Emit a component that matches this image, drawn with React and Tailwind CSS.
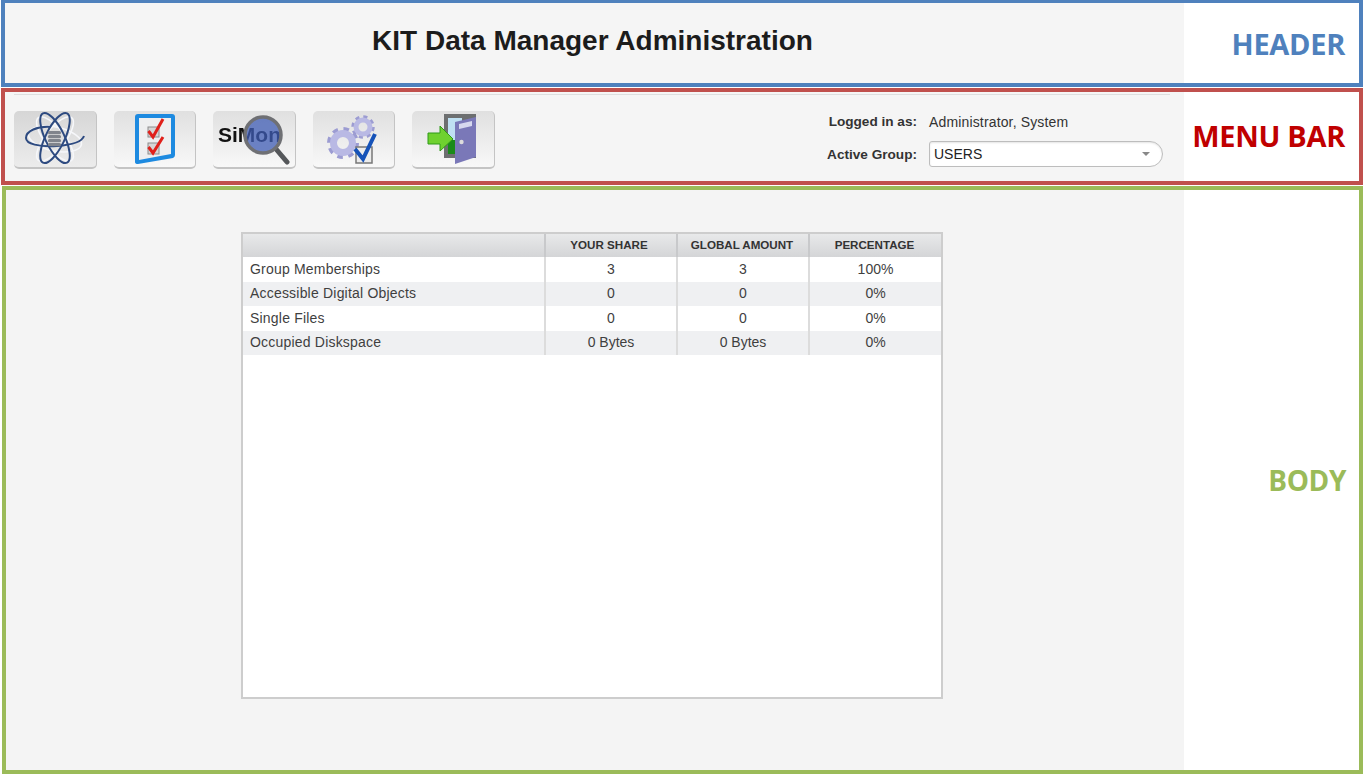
import React from "react";

const rows = [
    { name: "Group Memberships", share: "3", total: "3", percent: "100%" },
    { name: "Accessible Digital Objects", share: "0", total: "0", percent: "0%" },
    { name: "Single Files", share: "0", total: "0", percent: "0%" },
    { name: "Occupied Diskspace", share: "0 Bytes", total: "0 Bytes", percent: "0%" },
];

const AtomIcon = () => (
    <svg width="83" height="58" viewBox="0 0 83 58" fill="none">
        <g stroke="#f6f7fa" strokeWidth="1.6" transform="translate(41 28)">
            <ellipse rx="27" ry="12" transform="rotate(12)" />
            <ellipse rx="27" ry="10" transform="rotate(52)" />
            <ellipse rx="27" ry="10" transform="rotate(-52)" />
        </g>
        <g stroke="#2d4a80" strokeWidth="2" transform="translate(41 27)">
            <path d="M-4-11C-18-12-29-7-29 0C-29 6-16 9 2 8C16 7 27 4 29 -2" />
            <ellipse rx="27.5" ry="9.5" transform="rotate(64)" />
            <ellipse rx="27.5" ry="9.5" transform="rotate(-64)" />
        </g>
        <g fill="#80848c">
            <rect x="34" y="20" width="13" height="3.2" rx="1.5" />
            <rect x="34" y="24" width="13" height="3.2" rx="1.5" />
            <rect x="34" y="28" width="13" height="3.2" rx="1.5" />
            <rect x="34" y="32" width="13" height="3.2" rx="1.5" />
        </g>
    </svg>
);

const ChecklistIcon = () => (
    <svg width="83" height="58" viewBox="0 0 83 58" fill="none">
        <path d="M24 3H58Q61 3 61 6V44Q61 46 59 47L24 53Q21 53 21 51V6Q21 3 24 3Z" fill="#1d8ae0" />
        <path d="M25 7H57V43L25 49Z" fill="#eeeff0" />
        <rect x="34" y="16" width="11" height="10" fill="#d6d6d6" stroke="#8c8c8c" />
        <rect x="34" y="32" width="11" height="11" fill="#d6d6d6" stroke="#8c8c8c" />
        <path d="M34.5 20L39 26L49 8" stroke="#e0201b" strokeWidth="3" />
        <path d="M34.5 36L39 42L49 26" stroke="#e0201b" strokeWidth="3" />
    </svg>
);

const SimonIcon = () => (
    <svg width="83" height="58" viewBox="0 0 83 58" fill="none">
        <text x="5" y="31" fontFamily="Liberation Sans" fontWeight="700" fontSize="21" fill="#111">SiMon</text>
        <path d="M63 38L74 51" stroke="#55575a" strokeWidth="5" strokeLinecap="round" />
        <circle cx="50" cy="24" r="18" fill="#3f5cb4" fillOpacity="0.75" />
        <circle cx="50" cy="24" r="18" stroke="#6f7074" strokeWidth="3.5" />
    </svg>
);

const GearsIcon = () => (
    <svg width="83" height="58" viewBox="0 0 83 58" fill="none">
        <g fill="none">
            <circle cx="50" cy="16" r="10" stroke="#9c9cd2" strokeWidth="3.5" strokeDasharray="4 3.85" />
            <circle cx="50" cy="16" r="7" stroke="#b9b9e4" strokeWidth="5" />
            <circle cx="30" cy="32" r="14" stroke="#9c9cd2" strokeWidth="4" strokeDasharray="5.5 5.5" />
            <circle cx="30" cy="32" r="9.5" stroke="#b9b9e4" strokeWidth="7" />
        </g>
        <rect x="43" y="36" width="16" height="16" fill="#ececec" stroke="#777" strokeWidth="1.5" />
        <path d="M42 38L50 48L62 23" stroke="#1552b8" strokeWidth="4" />
    </svg>
);

const DoorIcon = () => (
    <svg width="83" height="58" viewBox="0 0 83 58" fill="none">
        <rect x="32" y="3" width="32" height="44" fill="#6d6f70" />
        <rect x="36" y="7" width="14" height="22" fill="#bfe0f2" />
        <rect x="36" y="29" width="14" height="14" fill="#1a8a1a" />
        <path d="M43 11L64 6V46L43 53Z" fill="#7a78b8" />
        <path d="M47 13L60 10V15L47 18Z" fill="#d6d8ee" />
        <circle cx="49.5" cy="31" r="2.2" fill="#dcdcdc" />
        <path d="M16 22H28V15L41 28L28 40V33H16Z" fill="#6fd12f" stroke="#2f9a18" />
    </svg>
);

const MenuButton = ({ active, children }) => (
    <button
        className={`w-[82.5px] h-[58px] rounded-[5px] border-b-2 border-r border-[#c4c4c4] overflow-hidden ${active ? "bg-gradient-to-b from-[#d6d6d6] to-[#ececec]" : "bg-gradient-to-b from-[#e0e0e0] to-[#f8f8f8]"}`}
    >
        <div className="blur-[0.4px]">{children}</div>
    </button>
);

const App = () => {
    return (
        <div className="w-[1367px] h-[774px] bg-white flex flex-col overflow-hidden font-['Liberation_Sans',Arial,sans-serif]">
            {/* header */}
            <div className="ml-[1px] w-[1362px] h-[87px] shrink-0 border-[4px] border-t-[3px] border-[#4f81bd] flex">
                <div className="w-[1179px] bg-[#f5f5f5] flex justify-center pt-[18px] pr-[4px]">
                    <h1 className="text-[28px] leading-[40px] font-bold text-[#1c1c1c]">KIT Data Manager Administration</h1>
                </div>
                <div className="flex-1 flex justify-end pt-[21px] pr-[14px]">
                    <span className="text-[29px] leading-[40px] font-bold text-[#4f81bd] font-['Open_Sans',sans-serif] tracking-[-0.3px]">HEADER</span>
                </div>
            </div>

            {/* menu bar */}
            <div className="mt-[1px] ml-[1px] w-[1362px] h-[97px] shrink-0 border-[4px] border-[#c0504d] flex">
                <div className="w-[1179px] bg-[#f5f5f5] pl-[9px] pr-[14px] pt-[2px]">
                    <div className="h-[1px] bg-[#dedede] mb-[16px]" />
                    <div className="flex items-start justify-between">
                        <div className="flex gap-[17px]">
                            <MenuButton active><AtomIcon /></MenuButton>
                            <MenuButton><ChecklistIcon /></MenuButton>
                            <MenuButton><SimonIcon /></MenuButton>
                            <MenuButton><GearsIcon /></MenuButton>
                            <MenuButton><DoorIcon /></MenuButton>
                        </div>
                        <div className="grid grid-cols-[auto_234px] gap-x-[12px] text-[#333] text-[14px] pr-[7px] pt-[1px]">
                            <span className="font-bold text-right leading-[20px] text-[13.6px]">Logged in as:</span>
                            <span className="leading-[20px] tracking-[0.15px]">Administrator, System</span>
                            <span className="font-bold text-right leading-[28px] mt-[9px] text-[13.6px]">Active Group:</span>
                            <div className="mt-[9px] h-[26px] border border-[#bdbdbd] rounded-l-[3px] rounded-r-[13px] bg-white pl-[4px] pr-[12px] flex items-center justify-between shadow-[inset_0_1px_2px_#e4e4e4]">
                                <span className="text-[14px] text-[#222]">USERS</span>
                                <span className="w-0 h-0 border-l-[4px] border-r-[4px] border-t-[4px] border-l-transparent border-r-transparent border-t-[#888]" />
                            </div>
                        </div>
                    </div>
                </div>
                <div className="flex-1 flex justify-end pt-[24px] pr-[14px]">
                    <span className="text-[29px] leading-[40px] font-bold text-[#c00000] font-['Open_Sans',sans-serif] tracking-[-0.3px] whitespace-nowrap">MENU BAR</span>
                </div>
            </div>

            {/* body */}
            <div className="mt-[1px] ml-[2px] w-[1361px] flex-1 border-[4px] border-[#9bbb59] flex">
                <div className="w-[1178px] bg-[#f4f4f4] pl-[235px] pt-[42px]">
                    <div className="w-[702px] h-[467px] border-2 border-[#cdcdcd] bg-white">
                        <table className="w-full table-fixed border-collapse text-[14px] text-[#3f3f3f]">
                            <thead>
                                <tr className="h-[23px] bg-gradient-to-b from-[#e8e9ea] to-[#d4d5d7] text-[11.6px] font-bold text-[#333]">
                                    <th className="w-[302px]" />
                                    <th className="w-[132px] border-l-2 border-[#c8c9cb] pr-[4px] pb-[2px]">YOUR SHARE</th>
                                    <th className="w-[132px] border-l-2 border-[#c8c9cb] pr-[2px] pb-[2px]">GLOBAL AMOUNT</th>
                                    <th className="border-l-2 border-[#c8c9cb] pr-[2px] pb-[2px]">PERCENTAGE</th>
                                </tr>
                            </thead>
                            <tbody>
                                {rows.map((row, index) => (
                                    <tr key={row.name} className={`h-[24.5px] ${index % 2 === 1 ? "bg-[#eff0f2]" : "bg-white"}`}>
                                        <td className="pl-[7px] tracking-[0.2px]">{row.name}</td>
                                        <td className="text-center border-l-2 border-[#dcdcdc]">{row.share}</td>
                                        <td className="text-center border-l-2 border-[#dcdcdc]">{row.total}</td>
                                        <td className="text-center border-l-2 border-[#dcdcdc]">{row.percent}</td>
                                    </tr>
                                ))}
                            </tbody>
                        </table>
                    </div>
                </div>
                <div className="flex-1 flex justify-end pt-[270px] pr-[13px]">
                    <span className="text-[28px] leading-[40px] font-bold text-[#9bbb59] font-['Open_Sans',sans-serif] tracking-[-0.4px] h-[40px]">BODY</span>
                </div>
            </div>
        </div>
    );
};

export default App;
